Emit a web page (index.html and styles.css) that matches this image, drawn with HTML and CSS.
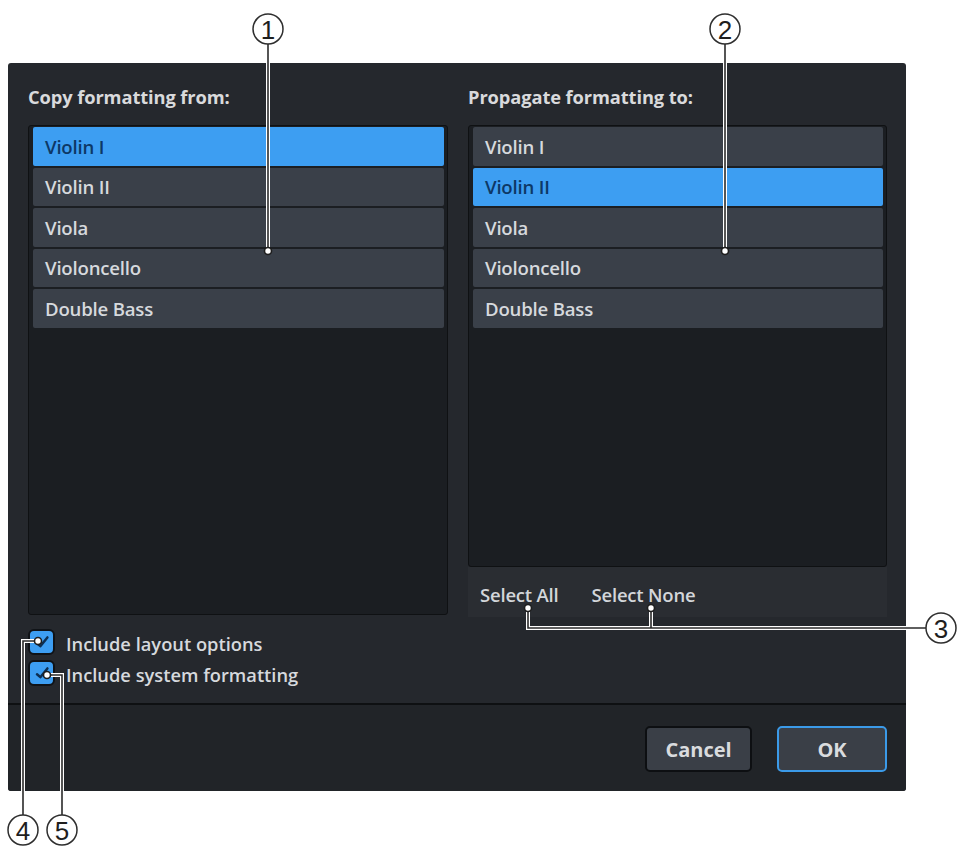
FILE: index.html
```html
<!DOCTYPE html>
<html lang="en">
<head>
<meta charset="utf-8">
<title>Copy Layout Formatting</title>
<link rel="stylesheet" href="styles.css">
</head>
<body>
<div class="page">
  <div class="dialog">
    <div class="dialog-body">
      <div class="columns">
        <section class="col">
          <h2 class="col-title">Copy formatting from:</h2>
          <ul class="list list-tall">
            <li class="row selected">Violin I</li>
            <li class="row">Violin II</li>
            <li class="row">Viola</li>
            <li class="row">Violoncello</li>
            <li class="row">Double Bass</li>
          </ul>
        </section>
        <section class="col">
          <h2 class="col-title">Propagate formatting to:</h2>
          <ul class="list list-short">
            <li class="row">Violin I</li>
            <li class="row selected">Violin II</li>
            <li class="row">Viola</li>
            <li class="row">Violoncello</li>
            <li class="row">Double Bass</li>
          </ul>
          <div class="select-bar">
            <span class="link">Select All</span>
            <span class="link">Select None</span>
          </div>
        </section>
      </div>
      <div class="options">
        <label class="option">
          <span class="checkbox"><svg viewBox="0 0 24 24" width="20" height="20"><path d="M6 13.5 L10 17 L18.5 6.5" fill="none" stroke="#0d2f52" stroke-width="3" stroke-linecap="round" stroke-linejoin="round"/></svg></span>
          <span class="option-text">Include layout options</span>
        </label>
        <label class="option">
          <span class="checkbox"><svg viewBox="0 0 24 24" width="20" height="20"><path d="M6 13.5 L10 17 L18.5 6.5" fill="none" stroke="#0d2f52" stroke-width="3" stroke-linecap="round" stroke-linejoin="round"/></svg></span>
          <span class="option-text">Include system formatting</span>
        </label>
      </div>
    </div>
    <div class="dialog-footer">
      <button class="btn">Cancel</button>
      <button class="btn btn-default">OK</button>
    </div>
  </div>

  <svg class="callouts" width="965" height="848" viewBox="0 0 965 848">
    <g class="halo">
      <path d="M268 44 V251"/>
      <path d="M725 44 V251"/>
      <path d="M528 608 V628 H926 M651 608 V628"/>
      <path d="M23 815 V641 H38"/>
      <path d="M62 815 V675 H47"/>
    </g>
    <g class="leader">
      <path d="M268 44 V251"/>
      <path d="M725 44 V251"/>
      <path d="M528 608 V628 H926 M651 608 V628"/>
      <path d="M23 815 V641 H38"/>
      <path d="M62 815 V675 H47"/>
    </g>
    <g class="dot">
      <circle cx="268" cy="251" r="3.5"/>
      <circle cx="725" cy="251" r="3.5"/>
      <circle cx="528" cy="608" r="3.5"/>
      <circle cx="651" cy="608" r="3.5"/>
      <circle cx="38" cy="641" r="3.5"/>
      <circle cx="47" cy="675" r="3.5"/>
    </g>
    <g class="badge">
      <circle cx="268" cy="29" r="15"/>
      <circle cx="725" cy="29" r="15"/>
      <circle cx="941" cy="628" r="15"/>
      <circle cx="23" cy="830" r="15"/>
      <circle cx="62" cy="830" r="15"/>
    </g>
    <g class="badge-num">
      <text x="268" y="38.5">1</text>
      <text x="725" y="38.5">2</text>
      <text x="941" y="637.5">3</text>
      <text x="23" y="839.5">4</text>
      <text x="62" y="839.5">5</text>
    </g>
  </svg>
</div>
</body>
</html>
```

FILE: styles.css
```css
* {
  box-sizing: border-box;
}

body {
  margin: 0;
  background: #ffffff;
  font-family: "Open Sans", "Noto Sans", sans-serif;
}

.page {
  position: relative;
  width: 965px;
  height: 848px;
  padding: 63px 0 0 8px;
}

.dialog {
  width: 898px;
  height: 728px;
  background: #25282d;
  border-radius: 3px;
  display: flex;
  flex-direction: column;
  overflow: hidden;
}

.dialog-body {
  flex: 1;
  padding: 20px 19px 0 20px;
  display: flex;
  flex-direction: column;
}

.columns {
  display: flex;
  gap: 20px;
  height: 534px;
}

.col {
  width: 420px;
  display: flex;
  flex-direction: column;
}

.col + .col {
  width: 419px;
}

.col-title {
  margin: 0 0 14px;
  height: 28px;
  line-height: 28px;
  font-size: 18.3px;
  font-weight: 700;
  color: #d9dadc;
  letter-spacing: -0.1px;
}

.list {
  list-style: none;
  margin: 0;
  padding: 1px 3px 0 4px;
  background: #1b1e22;
  border: 1px solid #0f1113;
  border-radius: 3px;
}

.list-tall {
  height: 490px;
}

.list-short {
  height: 442px;
}

.row {
  height: 38.5px;
  margin-bottom: 2px;
  padding-left: 12px;
  display: flex;
  align-items: center;
  background: #3a4049;
  border-radius: 2px;
  color: #d6d9dd;
  font-size: 18.6px;
  font-weight: 600;
  letter-spacing: -0.2px;
}

.row.selected {
  background: #3d9ef2;
  color: #0d3866;
}

.select-bar {
  height: 50px;
  background: #2a2d32;
  display: flex;
  align-items: center;
  gap: 33px;
  padding: 4px 0 0 12px;
}

.link {
  color: #d3d6da;
  font-size: 18.5px;
  font-weight: 600;
  letter-spacing: -0.2px;
}

.options {
  margin-top: 11px;
  display: flex;
  flex-direction: column;
  gap: 3px;
}

.option {
  height: 28px;
  display: flex;
  align-items: center;
  gap: 11px;
}

.checkbox {
  width: 27px;
  height: 26px;
  border-radius: 6px;
  background: #3d9ef2;
  border: 2px solid #101317;
  display: flex;
  align-items: center;
  justify-content: center;
}

.option-text {
  color: #d6d9dd;
  font-size: 18.3px;
  font-weight: 600;
  padding-top: 3px;
}

.dialog-footer {
  height: 88px;
  border-top: 2px solid #0e1012;
  background: #212428;
  display: flex;
  justify-content: flex-end;
  align-items: center;
  gap: 25px;
  padding: 2px 19px 0 0;
}

.btn {
  height: 46px;
  border-radius: 5px;
  background: #3a3f47;
  border: 2px solid #0d0f12;
  color: #d9dbde;
  font-family: "Open Sans", "Noto Sans", sans-serif;
  font-size: 20px;
  font-weight: 700;
  width: 107px;
  padding: 0;
}

.btn-default {
  width: 110px;
  border-color: #3b9ae8;
}

.callouts {
  position: absolute;
  top: 0;
  left: 0;
  pointer-events: none;
}

.halo path {
  fill: none;
  stroke: #ffffff;
  stroke-width: 4;
}

.leader path {
  fill: none;
  stroke: #2b2b2b;
  stroke-width: 1.6;
}

.dot circle {
  fill: #ffffff;
  stroke: #1e1e1e;
  stroke-width: 1.6;
}

.badge circle {
  fill: #ffffff;
  stroke: #2e2e2e;
  stroke-width: 1.5;
}

.badge-num text {
  font-family: "Liberation Sans", Arial, sans-serif;
  font-size: 26px;
  fill: #1e1e1e;
  text-anchor: middle;
}
```
